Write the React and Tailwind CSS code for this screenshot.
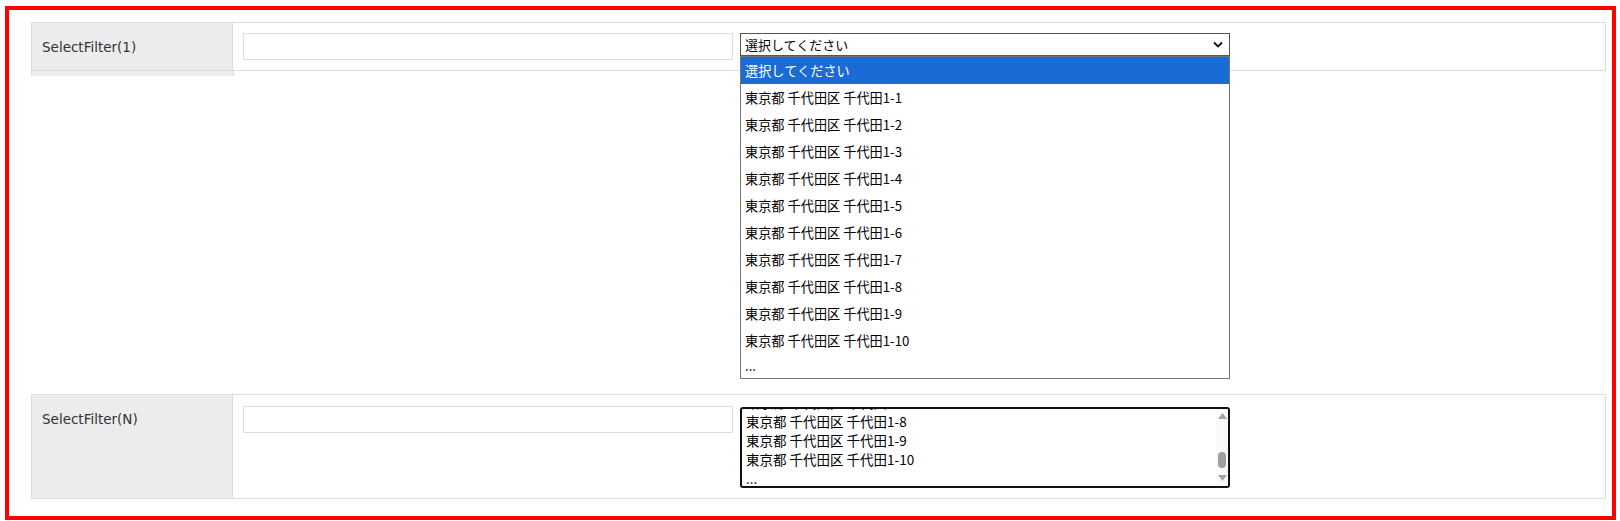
import React from 'react';

const options = [
  '選択してください',
  ...Array.from({ length: 10 }, (_, i) => `東京都 千代田区 千代田1-${i + 1}`),
  '...',
];

const jp = "font-['Noto_Sans_CJK_JP','Noto_Sans',sans-serif]";

function Label({ children }) {
  return (
    <div className="w-[201px] shrink-0 border-r border-[#dddddd] bg-[#ececec] px-[10px] pt-[14px] font-['DejaVu_Sans',sans-serif] text-[13.5px] leading-[20px] text-[#333]">
      {children}
    </div>
  );
}

function OpenSelect() {
  return (
    <div className="relative w-[490px]">
      <div className={`flex h-[23px] items-center justify-between border border-[#555] bg-white pl-[4px] pr-[6px] ${jp} text-[13px] text-black`}>
        <span>選択してください</span>
        <svg width="10" height="7" viewBox="0 0 10 7">
          <polyline points="1,1.5 5,5.5 9,1.5" fill="none" stroke="#111" strokeWidth="1.8" />
        </svg>
      </div>
      {/* open dropdown list */}
      <div className={`absolute left-0 top-full z-10 w-full border border-[#767676] bg-white ${jp} text-[13.2px] text-black`}>
        {options.map((o, i) => (
          <div
            key={i}
            className={`flex items-center pl-[4px] ${i === options.length - 1 ? 'h-[24px]' : 'h-[27px]'} ${i === 0 ? 'bg-[#1b6bd5] text-white' : ''}`}
          >
            {o}
          </div>
        ))}
      </div>
    </div>
  );
}

function ListBox() {
  // scrolled down: only the rows from 1-7 onward are in view
  const visible = options.slice(7);
  return (
    <div className={`mt-[1px] flex h-[81px] w-[490px] overflow-hidden rounded-[3px] border-2 border-[#111] bg-white ${jp} text-[13.5px] text-black`}>
      <div className="flex-1 overflow-hidden">
        <div className="-mt-[16px]">
          {visible.map((o, i) => (
            <div key={i} className="h-[19px] pl-[4px] leading-[19px]">
              {o}
            </div>
          ))}
        </div>
      </div>
      {/* scrollbar */}
      <div className="flex w-[12px] flex-col items-center bg-[#f9f9f9] pt-[4px]">
        <svg width="9" height="6" viewBox="0 0 9 6">
          <polygon points="4.5,0 9,6 0,6" fill="#a3a3a3" />
        </svg>
        <div className="mt-[33px] h-[16px] w-[8px] rounded-full bg-[#a0a0a0]" />
        <svg className="mt-[7px]" width="9" height="6" viewBox="0 0 9 6">
          <polygon points="0,0 9,0 4.5,6" fill="#a3a3a3" />
        </svg>
      </div>
    </div>
  );
}

export default function App() {
  return (
    <div className="h-[521px] w-[1620px] bg-white pl-[5px] pt-[6px]">
      <div className="h-[514px] w-[1611px] border-4 border-[#ff0000] pl-[22px] pr-[6px] pt-[12px]">
        {/* SelectFilter(1) */}
        <div className="flex h-[49px] border border-[#dddddd]">
          <Label>SelectFilter(1)</Label>
          <div className="flex flex-1 items-start gap-[7px] pl-[10px] pt-[10px]">
            <div className="h-[27px] w-[490px] border border-[#dddddd] bg-white" />
            <OpenSelect />
          </div>
        </div>
        <div className="h-[5px] w-[203px] border-x border-[#dddddd] bg-[#ececec]" />

        {/* SelectFilter(N) */}
        <div className="mt-[318px] flex h-[105px] border border-[#dddddd]">
          <Label>SelectFilter(N)</Label>
          <div className="flex flex-1 items-start gap-[7px] pl-[10px] pt-[11px]">
            <div className="h-[27px] w-[490px] border border-[#dddddd] bg-white" />
            <ListBox />
          </div>
        </div>
      </div>
    </div>
  );
}
